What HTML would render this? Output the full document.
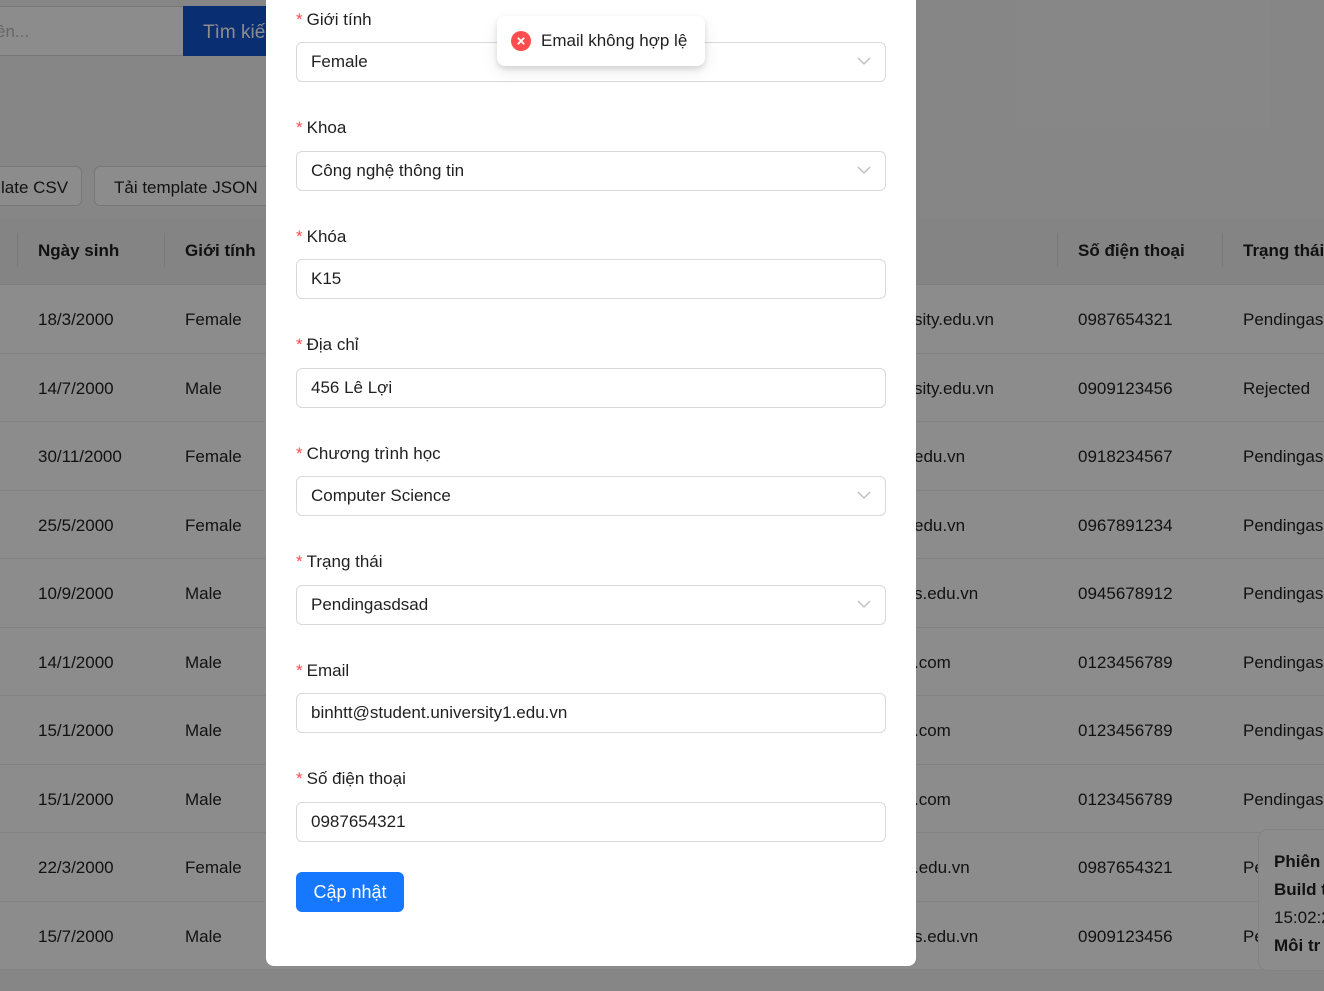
<!DOCTYPE html>
<html><head><meta charset="utf-8"><style>
*{box-sizing:border-box;margin:0;padding:0}
body{width:1324px;height:991px;overflow:hidden;position:relative;background:#f5f5f5;font-family:"Liberation Sans","DejaVu Sans",sans-serif;color:rgba(0,0,0,.88)}
.a{position:absolute;white-space:nowrap}
.t{font-size:17px}
.hd{font-weight:bold;font-size:17px}
.ov{position:absolute;inset:0;background:rgba(0,0,0,.45)}
.modal{position:absolute;left:266px;top:-20px;width:650px;height:986px;background:#fff;border-radius:8px}
.lbl{position:absolute;left:30px;font-size:17px;color:rgba(0,0,0,.88)}
.lbl b{color:#ff4d4f;font-weight:normal;margin-right:4px}
.inp{position:absolute;left:30px;width:590px;height:40px;border:1px solid #d9d9d9;border-radius:6px;font-size:17px;padding:0 14px;line-height:38px}
.chev{position:absolute;right:14px;top:13px;width:14px;height:10px}
</style></head><body>
<div class="a" style="left:-10px;top:6px;width:194px;height:50px;background:#fff;border:1px solid #d9d9d9"></div>
<div class="a t" style="left:-4px;top:22px;color:#bbb">ên...</div>
<div class="a" style="left:183px;top:6px;width:100px;height:50px;background:#1355d0;color:#fff;font-size:19px;padding:16px 20px">Tìm kiếm</div>
<div class="a t" style="left:-20px;top:166px;width:102px;height:40px;border:1px solid #d9d9d9;border-radius:6px;background:#fff;padding:11px 0 0 20px">late CSV</div>
<div class="a t" style="left:94px;top:166px;width:190px;height:40px;border:1px solid #d9d9d9;border-radius:6px;background:#fff;padding:11px 0 0 19px">Tải template JSON</div>
<div class="a" style="left:0;top:217px;width:1324px;height:68px;background:#f0f0f0;border-bottom:1px solid #e6e6e6"></div>
<div class="a" style="left:17px;top:233px;width:1px;height:34px;background:#ddd"></div>
<div class="a" style="left:164px;top:233px;width:1px;height:34px;background:#ddd"></div>
<div class="a" style="left:1057px;top:233px;width:1px;height:34px;background:#ddd"></div>
<div class="a" style="left:1222px;top:233px;width:1px;height:34px;background:#ddd"></div>
<div class="a hd" style="left:38px;top:241px">Ngày sinh</div>
<div class="a hd" style="left:185px;top:241px">Giới tính</div>
<div class="a hd" style="left:1078px;top:241px">Số điện thoại</div>
<div class="a hd" style="left:1243px;top:241px">Trạng thái</div>
<div id="rows"></div>
<script>
var d=[["18/3/2000","Female","sity.edu.vn","0987654321","Pendingasdsad"],["14/7/2000","Male","sity.edu.vn","0909123456","Rejected"],["30/11/2000","Female","edu.vn","0918234567","Pendingasdsad"],["25/5/2000","Female","edu.vn","0967891234","Pendingasdsad"],["10/9/2000","Male","s.edu.vn","0945678912","Pendingasdsad"],["14/1/2000","Male",".com","0123456789","Pendingasdsad"],["15/1/2000","Male",".com","0123456789","Pendingasdsad"],["15/1/2000","Male",".com","0123456789","Pendingasdsad"],["22/3/2000","Female",".edu.vn","0987654321","Pendingasdsad"],["15/7/2000","Male","s.edu.vn","0909123456","Pendingasdsad"]];
var h="";for(var i=0;i<d.length;i++){var y=285+i*68.5;var c=y+25;
h+='<div class="a" style="left:0;top:'+y+'px;width:1324px;height:68.5px;background:#fff;border-bottom:1px solid #eee"></div>';
var x=[38,185,914,1078,1243];for(var j=0;j<5;j++)h+='<div class="a t" style="left:'+x[j]+'px;top:'+c+'px">'+d[i][j]+'</div>';}
document.getElementById('rows').innerHTML=h;
</script>
<div class="a" style="left:1258px;top:829px;width:80px;height:142px;background:#fff;border:1px solid #eee;border-radius:10px;font-size:17px;padding:18px 0 0 15px;line-height:28px;z-index:1"><b>Phiên</b><br><b>Build t</b><br>15:02:2<br><b>Môi tr</b></div>
<div class="ov" style="z-index:2"></div>
<div class="modal" style="z-index:3">
<div style="position:absolute;left:0;top:41px;width:100%">
<div class="lbl" style="top:-11px"><b>*</b>Giới tính</div>
<div class="inp" style="top:21px">Female<svg class="chev" viewBox="0 0 14 10"><path d="M1 2l6 6 6-6" fill="none" stroke="#bbb" stroke-width="1.3"/></svg></div>
<div class="lbl" style="top:97px"><b>*</b>Khoa</div>
<div class="inp" style="top:130px">Công nghệ thông tin<svg class="chev" viewBox="0 0 14 10"><path d="M1 2l6 6 6-6" fill="none" stroke="#bbb" stroke-width="1.3"/></svg></div>
<div class="lbl" style="top:206px"><b>*</b>Khóa</div>
<div class="inp" style="top:238px">K15</div>
<div class="lbl" style="top:314px"><b>*</b>Địa chỉ</div>
<div class="inp" style="top:347px">456 Lê Lợi</div>
<div class="lbl" style="top:423px"><b>*</b>Chương trình học</div>
<div class="inp" style="top:455px">Computer Science<svg class="chev" viewBox="0 0 14 10"><path d="M1 2l6 6 6-6" fill="none" stroke="#bbb" stroke-width="1.3"/></svg></div>
<div class="lbl" style="top:531px"><b>*</b>Trạng thái</div>
<div class="inp" style="top:564px">Pendingasdsad<svg class="chev" viewBox="0 0 14 10"><path d="M1 2l6 6 6-6" fill="none" stroke="#bbb" stroke-width="1.3"/></svg></div>
<div class="lbl" style="top:640px"><b>*</b>Email</div>
<div class="inp" style="top:672px">binhtt@student.university1.edu.vn</div>
<div class="lbl" style="top:748px"><b>*</b>Số điện thoại</div>
<div class="inp" style="top:781px">0987654321</div>
<div style="position:absolute;left:30px;top:851px;width:108px;height:40px;background:#1677ff;border-radius:6px;color:#fff;font-size:18px;text-align:center;line-height:40px">Cập nhật</div>
</div></div>
<div class="a" style="left:497px;top:16px;width:208px;height:50px;background:#fff;border-radius:8px;box-shadow:0 6px 16px rgba(0,0,0,.08),0 3px 6px rgba(0,0,0,.12);z-index:4;font-size:17px;padding:15px 0 0 44px">
<svg style="position:absolute;left:14px;top:15px" width="20" height="20" viewBox="0 0 20 20"><circle cx="10" cy="10" r="10" fill="#ff4d4f"/><path d="M6.8 6.8l6.4 6.4M13.2 6.8l-6.4 6.4" stroke="#fff" stroke-width="1.8"/></svg>Email không hợp lệ</div>
</body></html>
